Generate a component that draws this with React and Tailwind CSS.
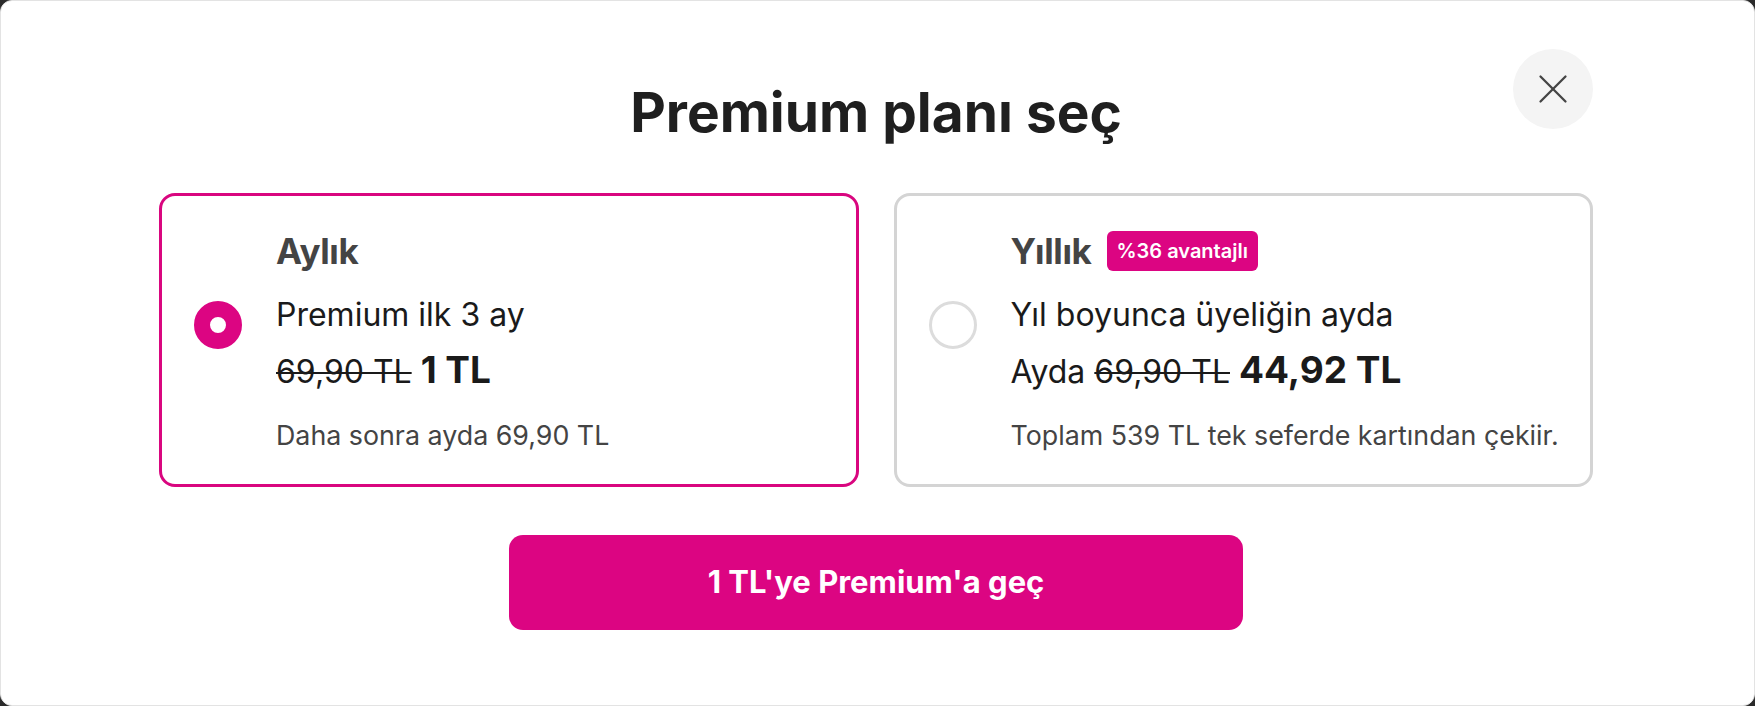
import { X } from 'lucide-react'

const plans = [
  {
    id: 'monthly',
    name: 'Aylık',
    badge: null,
    headline: 'Premium ilk 3 ay',
    prefix: null,
    oldPrice: '69,90 TL',
    price: '1 TL',
    note: 'Daha sonra ayda 69,90 TL'
  },
  {
    id: 'yearly',
    name: 'Yıllık',
    badge: '%36 avantajlı',
    headline: 'Yıl boyunca üyeliğin ayda',
    prefix: 'Ayda',
    oldPrice: '69,90 TL',
    price: '44,92 TL',
    note: 'Toplam 539 TL tek seferde kartından çekiir.'
  }
]

function Radio({ checked }) {
  if (checked) {
    return (
      <div className="mt-[70px] h-12 w-12 shrink-0 rounded-full border-[16px] border-[#dc0582] bg-white" />
    )
  }
  return (
    <div className="mt-[70px] h-12 w-12 shrink-0 rounded-full border-[3px] border-[#dcdcdc] bg-white" />
  )
}

function PlanCard({ plan, selected }) {
  return (
    <div
      className={
        selected
          ? 'flex gap-[34px] rounded-2xl border-[3px] border-[#d9067f] bg-white pl-8 pr-6 pt-[35px] pb-[33px]'
          : 'flex gap-[34px] rounded-2xl border-[3px] border-[#d4d4d4] bg-white pl-8 pr-6 pt-[35px] pb-[33px]'
      }
    >
      <Radio checked={selected} />
      <div className="flex min-w-0 flex-col">
        <div className="flex h-10 items-center gap-[15px]">
          <span className="text-[35px] font-bold leading-10 tracking-[-0.01em] text-[#444]">
            {plan.name}
          </span>
          {plan.badge && (
            <span className="flex h-10 items-center rounded-md bg-[#dc0582] px-[10px] text-[20px] font-semibold text-white">
              {plan.badge}
            </span>
          )}
        </div>
        <p className="mt-[26px] whitespace-nowrap text-[32px] leading-9 text-[#1a1a1a]">{plan.headline}</p>
        <p className="mt-[17px] flex items-baseline gap-[9px] whitespace-nowrap leading-10 text-[#1a1a1a]">
          {plan.prefix && <span className="text-[32px]">{plan.prefix}</span>}
          <span className="text-[32px] line-through decoration-2">{plan.oldPrice}</span>
          <span className="text-[37px] font-bold">{plan.price}</span>
        </p>
        <p className="mt-[27px] whitespace-nowrap text-[26.8px] leading-8 text-[#444]">{plan.note}</p>
      </div>
    </div>
  )
}

export default function App() {
  return (
    <div
      className="h-[706px] w-full bg-[#2b2b2b]"
      style={{ fontFamily: 'Inter, "Noto Sans", "Liberation Sans", sans-serif' }}
    >
      <div className="flex h-full flex-col rounded-xl border border-[#e3e3e3] bg-white pl-[158px] pr-[161px]">
        <div className="grid grid-cols-[80px_1fr_80px] items-start pt-[48px]">
          <div />
          <h1 className="mt-[35px] text-center text-[55px] font-bold leading-[56px] text-[#1f1f1f]">
            Premium planı seç
          </h1>
          <button className="flex h-20 w-20 items-center justify-center rounded-full bg-[#f4f4f4] text-[#444]">
            <X size={50} strokeWidth={1.1} />
          </button>
        </div>

        <div className="mt-[53px] grid grid-cols-2 gap-[35px]">
          {plans.map((plan) => (
            <PlanCard key={plan.id} plan={plan} selected={plan.id === 'monthly'} />
          ))}
        </div>

        <div className="mt-[48px] flex justify-center">
          <button className="h-[95px] w-[734px] rounded-[14px] bg-[#dc0582] text-[31px] font-bold text-white">
            1 TL'ye Premium'a geç
          </button>
        </div>
      </div>
    </div>
  )
}
